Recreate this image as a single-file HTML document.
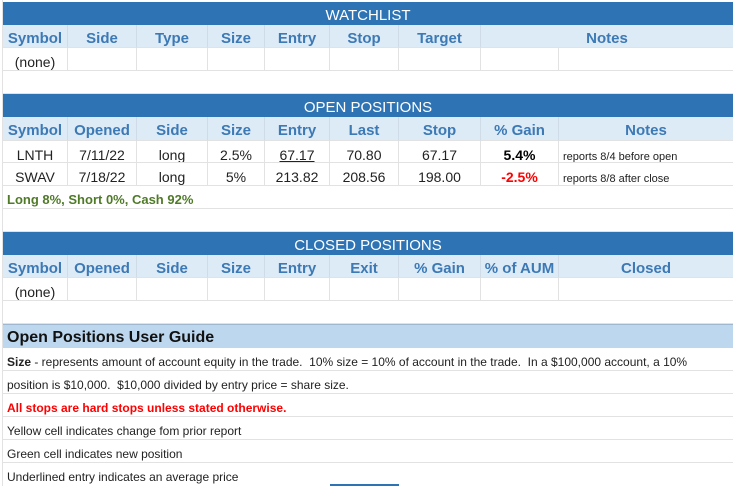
<!DOCTYPE html>
<html><head><meta charset="utf-8"><style>
*{margin:0;padding:0;box-sizing:border-box}
body{width:733px;height:486px;overflow:hidden;background:#fff;font-family:"Liberation Sans",Arial,sans-serif;position:relative}
.c{position:absolute;border-right:1px solid #e2e2e2;border-bottom:1px solid #e2e2e2;font-size:14px;color:#222;text-align:center;line-height:22px;padding-top:3px;white-space:nowrap;overflow:hidden}
.h{position:absolute;left:3px;width:730px;background:#2e74b5;color:#fff;font-size:15px;text-align:center;line-height:23px;padding-top:2px;height:23px}
.ch{background:#ddebf7;color:#3c79b5;font-weight:bold;font-size:15px;border-right:1px solid #cfdbe6}
.gl{position:absolute;left:3px;width:730px;border-bottom:1px solid #e2e2e2;font-size:12px;color:#222;line-height:22px;padding-top:3px;padding-left:4px;white-space:nowrap}
.vl{position:absolute;left:2px;top:0;width:1px;height:486px;background:#e2e2e2}
</style></head><body>
<div class="vl"></div>
<div class="h" style="top:2px">WATCHLIST</div>
<div class="c ch" style="left:3px;top:25px;width:65px;height:23px">Symbol</div>
<div class="c ch" style="left:68px;top:25px;width:69px;height:23px">Side</div>
<div class="c ch" style="left:137px;top:25px;width:71px;height:23px">Type</div>
<div class="c ch" style="left:208px;top:25px;width:57px;height:23px">Size</div>
<div class="c ch" style="left:265px;top:25px;width:65px;height:23px">Entry</div>
<div class="c ch" style="left:330px;top:25px;width:69px;height:23px">Stop</div>
<div class="c ch" style="left:399px;top:25px;width:82px;height:23px">Target</div>
<div class="c ch" style="left:481px;top:25px;width:252px;height:23px;border-right:none">Notes</div>
<div class="c" style="left:3px;top:48px;width:65px;height:23px">(none)</div>
<div class="c" style="left:68px;top:48px;width:69px;height:23px"></div>
<div class="c" style="left:137px;top:48px;width:71px;height:23px"></div>
<div class="c" style="left:208px;top:48px;width:57px;height:23px"></div>
<div class="c" style="left:265px;top:48px;width:65px;height:23px"></div>
<div class="c" style="left:330px;top:48px;width:69px;height:23px"></div>
<div class="c" style="left:399px;top:48px;width:82px;height:23px"></div>
<div class="c" style="left:481px;top:48px;width:78px;height:23px"></div>
<div class="c" style="left:559px;top:48px;width:174px;height:23px;border-right:none"></div>
<div class="c" style="left:3px;top:71px;width:730px;height:23px;border-right:none"></div>

<div class="h" style="top:94px">OPEN POSITIONS</div>
<div class="c ch" style="left:3px;top:117px;width:65px;height:24px">Symbol</div>
<div class="c ch" style="left:68px;top:117px;width:69px;height:24px">Opened</div>
<div class="c ch" style="left:137px;top:117px;width:71px;height:24px">Side</div>
<div class="c ch" style="left:208px;top:117px;width:57px;height:24px">Size</div>
<div class="c ch" style="left:265px;top:117px;width:65px;height:24px">Entry</div>
<div class="c ch" style="left:330px;top:117px;width:69px;height:24px">Last</div>
<div class="c ch" style="left:399px;top:117px;width:82px;height:24px">Stop</div>
<div class="c ch" style="left:481px;top:117px;width:78px;height:24px">% Gain</div>
<div class="c ch" style="left:559px;top:117px;width:174px;height:24px;border-right:none">Notes</div>

<div class="c" style="left:3px;top:141px;width:65px;height:22px">LNTH</div>
<div class="c" style="left:68px;top:141px;width:69px;height:22px">7/11/22</div>
<div class="c" style="left:137px;top:141px;width:71px;height:22px">long</div>
<div class="c" style="left:208px;top:141px;width:57px;height:22px">2.5%</div>
<div class="c" style="left:265px;top:141px;width:65px;height:22px"><u>67.17</u></div>
<div class="c" style="left:330px;top:141px;width:69px;height:22px">70.80</div>
<div class="c" style="left:399px;top:141px;width:82px;height:22px">67.17</div>
<div class="c" style="left:481px;top:141px;width:78px;height:22px;font-weight:bold;color:#000">5.4%</div>
<div class="c" style="left:559px;top:141px;width:174px;height:22px;border-right:none;text-align:left;font-size:11px;padding-left:4px;line-height:26px">reports 8/4 before open</div>

<div class="c" style="left:3px;top:163px;width:65px;height:23px">SWAV</div>
<div class="c" style="left:68px;top:163px;width:69px;height:23px">7/18/22</div>
<div class="c" style="left:137px;top:163px;width:71px;height:23px">long</div>
<div class="c" style="left:208px;top:163px;width:57px;height:23px">5%</div>
<div class="c" style="left:265px;top:163px;width:65px;height:23px">213.82</div>
<div class="c" style="left:330px;top:163px;width:69px;height:23px">208.56</div>
<div class="c" style="left:399px;top:163px;width:82px;height:23px">198.00</div>
<div class="c" style="left:481px;top:163px;width:78px;height:23px;font-weight:bold;color:#f00">-2.5%</div>
<div class="c" style="left:559px;top:163px;width:174px;height:23px;border-right:none;text-align:left;font-size:11px;padding-left:4px;line-height:26px">reports 8/8 after close</div>

<div class="c" style="left:3px;top:186px;width:730px;height:23px;border-right:none;text-align:left;padding-left:4px;font-size:13px;font-weight:bold;color:#4f7a28">Long 8%, Short 0%, Cash 92%</div>
<div class="c" style="left:3px;top:209px;width:730px;height:23px;border-right:none"></div>

<div class="h" style="top:232px">CLOSED POSITIONS</div>
<div class="c ch" style="left:3px;top:255px;width:65px;height:23px">Symbol</div>
<div class="c ch" style="left:68px;top:255px;width:69px;height:23px">Opened</div>
<div class="c ch" style="left:137px;top:255px;width:71px;height:23px">Side</div>
<div class="c ch" style="left:208px;top:255px;width:57px;height:23px">Size</div>
<div class="c ch" style="left:265px;top:255px;width:65px;height:23px">Entry</div>
<div class="c ch" style="left:330px;top:255px;width:69px;height:23px">Exit</div>
<div class="c ch" style="left:399px;top:255px;width:82px;height:23px">% Gain</div>
<div class="c ch" style="left:481px;top:255px;width:78px;height:23px">% of AUM</div>
<div class="c ch" style="left:559px;top:255px;width:174px;height:23px;border-right:none">Closed</div>
<div class="c" style="left:3px;top:278px;width:65px;height:23px">(none)</div>
<div class="c" style="left:68px;top:278px;width:69px;height:23px"></div>
<div class="c" style="left:137px;top:278px;width:71px;height:23px"></div>
<div class="c" style="left:208px;top:278px;width:57px;height:23px"></div>
<div class="c" style="left:265px;top:278px;width:65px;height:23px"></div>
<div class="c" style="left:330px;top:278px;width:69px;height:23px"></div>
<div class="c" style="left:399px;top:278px;width:82px;height:23px"></div>
<div class="c" style="left:481px;top:278px;width:78px;height:23px"></div>
<div class="c" style="left:559px;top:278px;width:174px;height:23px;border-right:none"></div>
<div class="c" style="left:3px;top:301px;width:730px;height:23px;border-right:none"></div>

<div style="position:absolute;left:3px;top:324px;width:730px;height:24px;background:#bdd7ee;border-top:1px solid #9fb8cf;font-size:16px;font-weight:bold;color:#111;line-height:23px;padding-top:1px;padding-left:4px">Open Positions User Guide</div>
<div class="gl" style="top:348px;height:23px"><b>Size</b> - represents amount of account equity in the trade.&nbsp; 10% size = 10% of account in the trade.&nbsp; In a $100,000 account, a 10%</div>
<div class="gl" style="top:371px;height:23px">position is $10,000.&nbsp; $10,000 divided by entry price = share size.</div>
<div class="gl" style="top:394px;height:23px;color:#f00;font-weight:bold">All stops are hard stops unless stated otherwise.</div>
<div class="gl" style="top:417px;height:23px">Yellow cell indicates change fom prior report</div>
<div class="gl" style="top:440px;height:23px">Green cell indicates new position</div>
<div class="gl" style="top:463px;height:23px;border:none">Underlined entry indicates an average price</div>
<div style="position:absolute;left:330px;top:484px;width:69px;height:2px;background:#2e74b5"></div>
</body></html>
